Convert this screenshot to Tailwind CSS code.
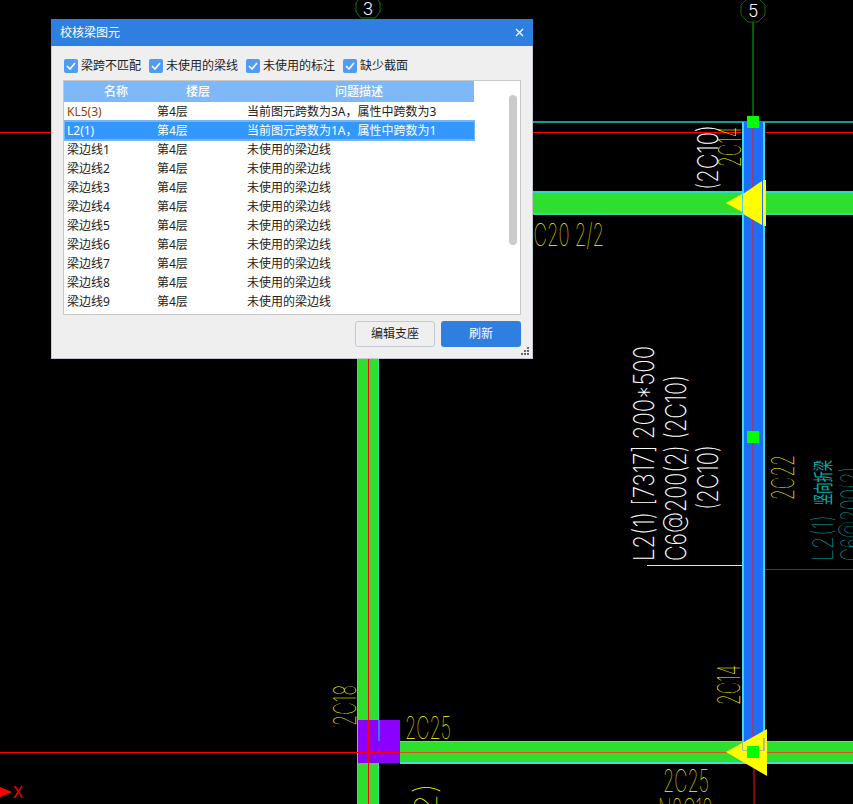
<!doctype html>
<html lang="en">
  <head>
    <meta charset="UTF-8">
    <title>校核梁图元</title>
    <script src="https://cdn.jsdelivr.net/npm/@tailwindcss/browser@4"></script>
  </head>

  <body class="relative w-[853px] h-[804px] overflow-hidden bg-black [font-family:'Noto_Sans','Noto_Sans_CJK_SC',sans-serif]">
    <!-- CAD drawing -->
    <svg class="absolute inset-0" width="853" height="804" viewBox="0 0 853 804">
      <!-- axis bubbles -->
      <polygon points="361,-4 375,-4 380,3 380,12 375,18 361,18 356,12 356,3" fill="none" stroke="#0a7a0a"/>
      <polygon points="748,-2 758,-2 765,5 765,15 758,22 748,22 741,15 741,5" fill="none" stroke="#0a6a0a"/>
      <rect x="752" y="22" width="2" height="96" fill="#0a5a0a"/>
      <text x="368" y="15" text-anchor="middle" fill="#fff" font-size="18" font-weight="300" class="[font-family:'Roboto',sans-serif]">3</text>
      <text x="753" y="17" text-anchor="middle" fill="#fff" font-size="18" font-weight="300" class="[font-family:'Roboto',sans-serif]">5</text>

      <!-- horizontal lines -->
      <rect x="533" y="121" width="320" height="2" fill="#0e9c9c"/>
      <rect x="0" y="132" width="853" height="1" fill="#ff0000"/>
      <rect x="753" y="569" width="100" height="1" fill="#0a5a5a"/>

      <!-- upper green beam -->
      <rect x="530" y="192" width="323" height="22" fill="#2de02d"/>
      <rect x="530" y="191" width="323" height="2" fill="#2fd8b8"/>
      <rect x="530" y="213" width="323" height="2" fill="#2fd8b8"/>

      <!-- left green column -->
      <rect x="357" y="340" width="22" height="464" fill="#2de02d"/>
      <rect x="357" y="340" width="1" height="464" fill="#3fd8c0"/>
      <rect x="378" y="340" width="1" height="464" fill="#3fd8c0"/>
      <rect x="368" y="340" width="1" height="464" fill="#ff0000"/>

      <!-- lower green beam -->
      <rect x="400" y="741" width="453" height="22" fill="#2de02d"/>
      <rect x="400" y="741" width="453" height="1" fill="#30e8d0"/>
      <rect x="400" y="762" width="453" height="2" fill="#30e8d0"/>

      <!-- purple column -->
      <rect x="358" y="720" width="42" height="43" fill="#8b00ff"/>
      <rect x="378" y="720" width="2" height="21" fill="#3a7bff"/>
      <rect x="0" y="752" width="853" height="1" fill="#ff0000"/>
      <rect x="400" y="752" width="453" height="1" fill="#e0501a"/>
      <rect x="368" y="720" width="1" height="43" fill="#ff0000"/>
      <rect x="753" y="763" width="2" height="41" fill="#8b0000"/>

      <!-- blue beam -->
      <rect x="742" y="122" width="23" height="629" fill="#1a6fff"/>
      <rect x="742" y="122" width="2" height="629" fill="#40d8f0"/>
      <rect x="763" y="122" width="2" height="629" fill="#40d8f0"/>
      <rect x="752" y="122" width="2" height="620" fill="#a03a78"/>

      <!-- arrows -->
      <polygon points="726,203 742,194 742,212" fill="#ffff00"/>
      <polygon points="743,194 762,181 762,225 743,214" fill="#ffff00"/>
      <rect x="763" y="180" width="3" height="46" fill="#ffff00"/>
      <polygon points="726,752 767,729 767,776" fill="#ffff00"/>
      <rect x="742" y="738" width="1" height="13" fill="#9fb0a8"/>
      <rect x="763" y="738" width="2" height="13" fill="#b8b890"/>
      <rect x="742" y="750" width="23" height="1" fill="#b8b8a0"/>

      <!-- grips -->
      <rect x="747" y="116" width="12" height="12" fill="#00ff00"/>
      <rect x="747" y="431" width="12" height="12" fill="#00ff00"/>
      <rect x="747" y="746" width="12" height="12" fill="#00ff00"/>

      <!-- leader -->
      <rect x="647" y="565" width="95" height="1" fill="#e0e0e0"/>

      <!-- white labels -->
      <g fill="#fff" font-size="28" font-weight="200" class="[font-family:'Inter',sans-serif]">
        <text transform="translate(654 561) rotate(-90)" textLength="215" lengthAdjust="spacingAndGlyphs">L2(1) [7317] 200*500</text>
        <text transform="translate(686 561) rotate(-90)" textLength="186" lengthAdjust="spacingAndGlyphs">C6@200(2) (2C10)</text>
        <text transform="translate(718 510) rotate(-90)" textLength="65" lengthAdjust="spacingAndGlyphs">(2C10)</text>
        <text transform="translate(718 190) rotate(-90)" textLength="65" lengthAdjust="spacingAndGlyphs">(2C10)</text>
      </g>

      <!-- yellow labels -->
      <g fill="#ffff00" font-size="31" font-weight="100" class="[font-family:'Inter',sans-serif]">
        <text transform="translate(741 167) rotate(-90)" textLength="40" lengthAdjust="spacingAndGlyphs">2C14</text>
        <text transform="translate(740 705) rotate(-90)" textLength="40" lengthAdjust="spacingAndGlyphs">2C14</text>
        <text transform="translate(794 500) rotate(-90)" textLength="45" lengthAdjust="spacingAndGlyphs">2C22</text>
        <text transform="translate(356 726) rotate(-90)" textLength="41" lengthAdjust="spacingAndGlyphs">2C18</text>
        <text transform="translate(437 815) rotate(-90)" textLength="32" lengthAdjust="spacingAndGlyphs">2)</text>
        <text x="405" y="739" textLength="46" lengthAdjust="spacingAndGlyphs">2C25</text>
        <text x="663" y="792" textLength="46" lengthAdjust="spacingAndGlyphs">2C25</text>
        <text x="658" y="821" textLength="55" lengthAdjust="spacingAndGlyphs">N2C12</text>
        <text x="522" y="246" textLength="82" lengthAdjust="spacingAndGlyphs">2C20 2/2</text>
      </g>

      <!-- teal labels -->
      <g fill="#0aa8a8">
        <text transform="translate(833 561) rotate(-90)" font-size="28" font-weight="100" textLength="46" lengthAdjust="spacingAndGlyphs" class="[font-family:'Inter',sans-serif]">L2(1)</text>
        <text transform="translate(831 505) rotate(-90)" font-size="20" textLength="45" lengthAdjust="spacingAndGlyphs" class="[font-family:'Noto_Sans_CJK_SC',sans-serif]">竖向折梁</text>
        <text transform="translate(861 561) rotate(-90)" font-size="28" font-weight="100" textLength="94" lengthAdjust="spacingAndGlyphs" class="[font-family:'Inter',sans-serif]">C6@200(2)</text>
      </g>

      <!-- x axis -->
      <polygon points="0,787 12,792 0,797" fill="#ff0000"/>
      <text x="13" y="798" fill="#ff0000" font-size="17" textLength="10" lengthAdjust="spacingAndGlyphs" class="[font-family:'Liberation_Sans',sans-serif]">X</text>
    </svg>

    <!-- Dialog -->
    <div class="absolute left-[51px] top-[19px] w-[482px] h-[340px] flex flex-col bg-[#efefef] border-r border-b border-l border-[#c3cad6]">
      <div class="h-[27px] flex items-center justify-between pl-[9px] pr-[9px] bg-[#2e7fe0] text-white text-[12px] -mx-px">
        <span>校核梁图元</span>
        <svg width="9" height="9" viewBox="0 0 9 9"><path d="M1 1l7 7M8 1l-7 7" stroke="#fff" stroke-width="1.3" fill="none"/></svg>
      </div>

      <div class="h-[34px] pl-[12px] pt-[6px] flex items-center text-[12px] text-[#222]">
        <label class="flex items-center gap-[3px] mr-[8px]">
          <span class="w-[14px] h-[14px] rounded-[2px] bg-[#4f9bf5] flex items-center justify-center"><svg width="10" height="8" viewBox="0 0 10 8"><path d="M1 4l3 3 5-6" stroke="#fff" stroke-width="1.6" fill="none"/></svg></span>
          梁跨不匹配
        </label>
        <label class="flex items-center gap-[3px] mr-[8px]">
          <span class="w-[14px] h-[14px] rounded-[2px] bg-[#4f9bf5] flex items-center justify-center"><svg width="10" height="8" viewBox="0 0 10 8"><path d="M1 4l3 3 5-6" stroke="#fff" stroke-width="1.6" fill="none"/></svg></span>
          未使用的梁线
        </label>
        <label class="flex items-center gap-[3px] mr-[8px]">
          <span class="w-[14px] h-[14px] rounded-[2px] bg-[#4f9bf5] flex items-center justify-center"><svg width="10" height="8" viewBox="0 0 10 8"><path d="M1 4l3 3 5-6" stroke="#fff" stroke-width="1.6" fill="none"/></svg></span>
          未使用的标注
        </label>
        <label class="flex items-center gap-[3px]">
          <span class="w-[14px] h-[14px] rounded-[2px] bg-[#4f9bf5] flex items-center justify-center"><svg width="10" height="8" viewBox="0 0 10 8"><path d="M1 4l3 3 5-6" stroke="#fff" stroke-width="1.6" fill="none"/></svg></span>
          缺少截面
        </label>
      </div>

      <!-- Table -->
      <div class="relative mx-[11px] w-[458px] h-[235px] bg-white border border-[#c8c8c8] text-[12px] text-[#222] overflow-hidden">
        <div class="w-[410px] h-[21px] grid grid-cols-[90px_90px_230px] items-center text-center bg-[#7fb8f8] text-white font-medium">
          <span class="pl-[14px]">名称</span>
          <span class="pr-[2px]">楼层</span>
          <span>问题描述</span>
        </div>
        <div class="w-[410px] h-[19px] grid grid-cols-[90px_90px_230px] items-center pl-[3px] text-[#8a4500]"><span>KL5(3)</span><span class="text-[#222]">第4层</span><span class="text-[#222]">当前图元跨数为3A，属性中跨数为3</span></div>
        <div class="w-[411px] h-[21px] -my-px grid grid-cols-[90px_90px_231px] items-center pl-[2px] bg-[#3397fb] border-y-2 border-x border-[#77b4f4] text-white"><span>L2(1)</span><span>第4层</span><span>当前图元跨数为1A，属性中跨数为1</span></div>
        <div class="w-[410px] h-[19px] grid grid-cols-[90px_90px_230px] items-center pl-[3px]"><span>梁边线1</span><span>第4层</span><span>未使用的梁边线</span></div>
        <div class="w-[410px] h-[19px] grid grid-cols-[90px_90px_230px] items-center pl-[3px]"><span>梁边线2</span><span>第4层</span><span>未使用的梁边线</span></div>
        <div class="w-[410px] h-[19px] grid grid-cols-[90px_90px_230px] items-center pl-[3px]"><span>梁边线3</span><span>第4层</span><span>未使用的梁边线</span></div>
        <div class="w-[410px] h-[19px] grid grid-cols-[90px_90px_230px] items-center pl-[3px]"><span>梁边线4</span><span>第4层</span><span>未使用的梁边线</span></div>
        <div class="w-[410px] h-[19px] grid grid-cols-[90px_90px_230px] items-center pl-[3px]"><span>梁边线5</span><span>第4层</span><span>未使用的梁边线</span></div>
        <div class="w-[410px] h-[19px] grid grid-cols-[90px_90px_230px] items-center pl-[3px]"><span>梁边线6</span><span>第4层</span><span>未使用的梁边线</span></div>
        <div class="w-[410px] h-[19px] grid grid-cols-[90px_90px_230px] items-center pl-[3px]"><span>梁边线7</span><span>第4层</span><span>未使用的梁边线</span></div>
        <div class="w-[410px] h-[19px] grid grid-cols-[90px_90px_230px] items-center pl-[3px]"><span>梁边线8</span><span>第4层</span><span>未使用的梁边线</span></div>
        <div class="w-[410px] h-[19px] grid grid-cols-[90px_90px_230px] items-center pl-[3px]"><span>梁边线9</span><span>第4层</span><span>未使用的梁边线</span></div>
        <!-- scrollbar -->
        <div class="absolute left-[445px] top-[14px] w-[8px] h-[150px] rounded-full bg-[#cbcbcb]"></div>
      </div>

      <div class="flex justify-end gap-[6px] mt-[6px] mr-[11px]">
        <button class="w-[80px] h-[26px] rounded-[3px] border border-[#c3cad6] text-[12px] text-[#222]">编辑支座</button>
        <button class="w-[80px] h-[26px] rounded-[3px] bg-[#2e7fe0] text-[12px] text-white">刷新</button>
      </div>

      <!-- resize grip -->
      <svg class="absolute right-[3px] bottom-[3px]" width="8" height="8" viewBox="0 0 8 8" fill="#666">
        <rect x="6" y="0" width="2" height="2"/><rect x="3" y="3" width="2" height="2"/><rect x="6" y="3" width="2" height="2"/><rect x="0" y="6" width="2" height="2"/><rect x="3" y="6" width="2" height="2"/><rect x="6" y="6" width="2" height="2"/>
      </svg>
    </div>
  </body>
</html>
